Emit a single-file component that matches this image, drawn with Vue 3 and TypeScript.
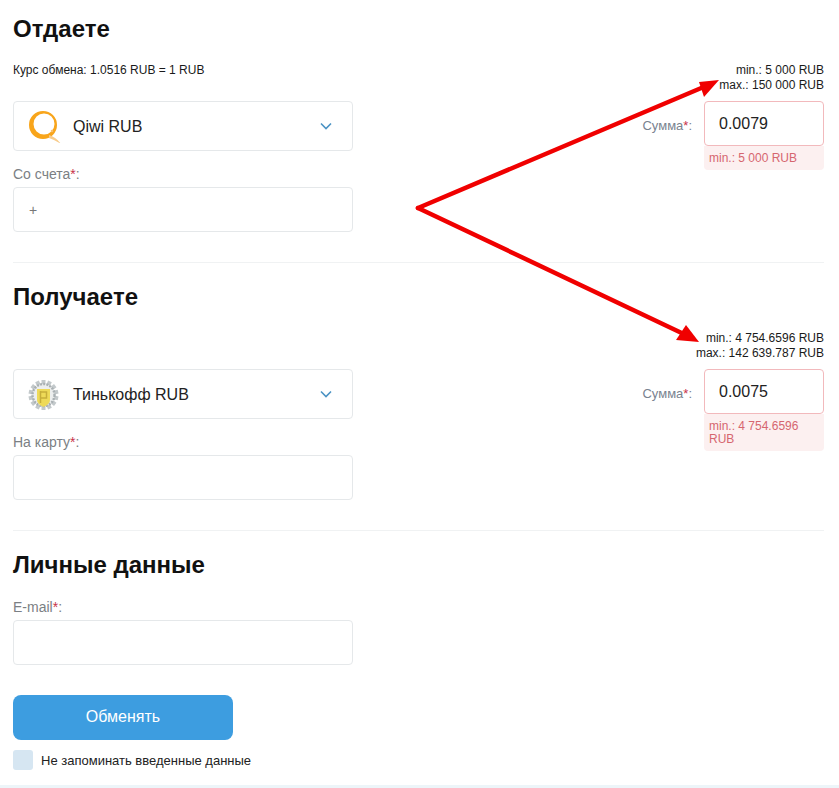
<script setup lang="ts">
interface Side {
  title: string
  rate: string
  currency: string
  logo: 'qiwi' | 'tinkoff'
  fieldLabel: string
  fieldValue: string
  limits: string[]
  amount: string
  error: string
}

const sides: Side[] = [
  {
    title: 'Отдаете',
    rate: 'Курс обмена: 1.0516 RUB = 1 RUB',
    currency: 'Qiwi RUB',
    logo: 'qiwi',
    fieldLabel: 'Со счета',
    fieldValue: '+',
    limits: ['min.: 5 000 RUB', 'max.: 150 000 RUB'],
    amount: '0.0079',
    error: 'min.: 5 000 RUB',
  },
  {
    title: 'Получаете',
    rate: '',
    currency: 'Тинькофф RUB',
    logo: 'tinkoff',
    fieldLabel: 'На карту',
    fieldValue: '',
    limits: ['min.: 4 754.6596 RUB', 'max.: 142 639.787 RUB'],
    amount: '0.0075',
    error: 'min.: 4 754.6596 RUB',
  },
]

const gearTeeth = Array.from({ length: 14 }, (_, i) => (i * 360) / 14)
</script>

<template>
  <div class="page">
    <form class="form" @submit.prevent>
      <section v-for="side in sides" :key="side.title" class="section">
        <h2 class="title">{{ side.title }}</h2>
        <div class="grid">
          <div class="rate">{{ side.rate }}</div>
          <div class="limits">
            <div v-for="line in side.limits" :key="line">{{ line }}</div>
          </div>
          <div class="left">
            <div class="select">
              <svg v-if="side.logo === 'qiwi'" class="logo" viewBox="0 0 34 34">
                <path
                  fill-rule="evenodd"
                  d="M15 2 A14 14 0 1 0 15 30 A14 14 0 1 0 15 2 Z M16 4.500 A10.500 10.500 0 1 1 16 25.500 A10.500 10.500 0 1 1 16 4.500 Z"
                  fill="#f8a51b"
                />
                <path d="M21 26 Q28 28 33 35 Q27 31 21 29 Z" fill="#f8cb8a" />
                <circle cx="24" cy="22" r="1.300" fill="#f9bf6c" />
              </svg>
              <svg v-else class="logo" viewBox="0 0 34 34">
                <g fill="#c3c9cb">
                  <rect
                    v-for="deg in gearTeeth"
                    :key="deg"
                    x="13.500"
                    y="3"
                    width="4"
                    height="5"
                    :transform="`rotate(${deg} 15.5 18)`"
                  />
                </g>
                <circle cx="15.500" cy="18" r="11" fill="#eceeee" stroke="#a9b0b3" stroke-width="2.400" stroke-dasharray="2 1.2" />
                <path d="M9 12 H22 V23 Q22 27 15.500 30 Q9 27 9 23 Z" fill="#eeda58" />
                <path d="M12.500 14 V26 M12.500 15 H18.500 V21 H12.500" fill="none" stroke="#c7ae3a" stroke-width="1.500" />
              </svg>
              <span class="select-name">{{ side.currency }}</span>
              <svg class="chevron" viewBox="0 0 12 8">
                <path d="M1 1.500 L6 6.500 L11 1.500" fill="none" stroke="#4b93c4" stroke-width="1.600" />
              </svg>
            </div>
            <label class="label">{{ side.fieldLabel }}<span class="star">*</span>:</label>
            <input class="input input-account" type="text" :value="side.fieldValue" />
          </div>
          <div class="right">
            <label class="sum-label">Сумма<span class="star">*</span>:</label>
            <div class="sum-box">
              <input class="input sum-input" type="text" :value="side.amount" />
              <div class="sum-error">{{ side.error }}</div>
            </div>
          </div>
        </div>
      </section>

      <section class="section section-last">
        <h2 class="title">Личные данные</h2>
        <label class="label label-first">E-mail<span class="star">*</span>:</label>
        <input class="input" type="text" />
        <button class="submit" type="submit">Обменять</button>
        <div class="remember">
          <span class="checkbox"></span>
          <span>Не запоминать введенные данные</span>
        </div>
      </section>
    </form>
    <div class="strip"></div>

    <!-- красные стрелки поверх формы -->
    <svg class="arrows" width="839" height="788" viewBox="0 0 839 788">
      <g fill="none" stroke="#f00000" stroke-width="4.500" stroke-linecap="round">
        <path d="M418 208 L706 86" />
        <path d="M418 208 L688 336" />
      </g>
      <polygon points="719,80 699,82 704,97" fill="#f00000" />
      <polygon points="699,342 676,340 686,325" fill="#f00000" />
    </svg>
  </div>
</template>

<style scoped>
.page {
  position: relative;
  height: 788px;
  overflow: hidden;
  background: #fff;
  color: #1a1a1a;
  font-family: "Liberation Sans", Arial, sans-serif;
}

.form {
  padding: 0 15px 0 13px;
}

.section {
  padding: 19px 0 30px;
  border-bottom: 1px solid #f0f2f3;
}

.section:first-child {
  padding-top: 14px;
}

.section-last {
  padding-bottom: 0;
  border-bottom: 0;
}

.title {
  margin: 0;
  height: 30px;
  font-size: 24px;
  line-height: 30px;
  font-weight: 700;
  color: #111;
}

.grid {
  display: grid;
  grid-template-columns: 340px 1fr;
  grid-template-rows: 39px auto;
  margin-top: 18px;
}

.rate {
  padding-top: 1px;
  font-size: 12px;
  line-height: 15px;
}

.limits {
  padding-top: 1px;
  text-align: right;
  font-size: 12px;
  line-height: 15px;
}

.select {
  display: flex;
  align-items: center;
  box-sizing: border-box;
  height: 50px;
  padding: 0 20px 0 14px;
  border: 1px solid #e5e8ea;
  border-radius: 4px;
}

.logo {
  width: 34px;
  height: 34px;
  flex-shrink: 0;
}

.select-name {
  flex: 1;
  margin: 2px 0 0 11px;
  font-size: 16px;
  color: #222;
}

.chevron {
  width: 12px;
  height: 8px;
}

.label {
  display: block;
  height: 16px;
  margin: 15px 0 5px;
  font-size: 14px;
  line-height: 16px;
  color: #7b7f84;
}

.label-first {
  margin-top: 19px;
}

.star {
  color: #c8324a;
}

.input {
  display: block;
  box-sizing: border-box;
  width: 340px;
  height: 45px;
  padding: 0 15px;
  border: 1px solid #e5e8ea;
  border-radius: 4px;
  outline: none;
  background: #fff;
  font-family: inherit;
  font-size: 14px;
  color: #555;
}

.input-account {
  color: #777;
}

.right {
  display: flex;
  justify-content: flex-end;
  align-items: flex-start;
}

.sum-label {
  margin: 17px 12px 0 0;
  font-size: 13px;
  line-height: 16px;
  color: #79828f;
}

.sum-box {
  width: 120px;
}

.sum-input {
  width: 120px;
  padding: 0 14px;
  border-color: #f2b9bc;
  font-size: 16px;
  color: #222;
}

.sum-error {
  padding: 6px 5px 5px;
  border-radius: 0 0 4px 4px;
  background: #fcf0f0;
  font-size: 12px;
  line-height: 13px;
  color: #d6666f;
}

.submit {
  display: block;
  width: 220px;
  height: 45px;
  margin-top: 30px;
  padding-bottom: 3px;
  border: 0;
  border-radius: 8px;
  background: #3d9de0;
  font-family: inherit;
  font-size: 16px;
  color: #fff;
}

.remember {
  display: flex;
  align-items: center;
  gap: 8px;
  margin-top: 10px;
  font-size: 13px;
  color: #222;
}

.checkbox {
  width: 20px;
  height: 20px;
  border-radius: 3px;
  background: #d6e6f2;
}

.strip {
  height: 3px;
  margin-top: 15px;
  background: #edf5f9;
}

.arrows {
  position: absolute;
  top: 0;
  left: 0;
  pointer-events: none;
}
</style>
